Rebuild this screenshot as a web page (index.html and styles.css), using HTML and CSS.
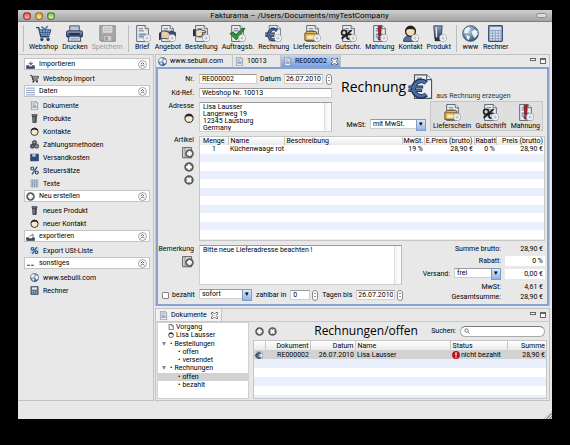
FILE: index.html
```html
<!DOCTYPE html>
<html lang="de">
<head>
    <meta charset="UTF-8">
    <meta name="viewport" content="width=device-width, initial-scale=1.0">
    <title>Fakturama</title>
    <link rel="stylesheet" href="styles.css">
</head>
<body>
    <!-- Icons -->
    <svg class="sprite" aria-hidden="true">
        <linearGradient id="steel" x1="0" y1="0" x2="0" y2="1">
            <stop offset="0" stop-color="#8fa5c2"/>
            <stop offset="1" stop-color="#25395c"/>
        </linearGradient>
        <radialGradient id="globe-fill" cx=".35" cy=".3" r=".8">
            <stop offset="0" stop-color="#c3d6ec"/>
            <stop offset="1" stop-color="#24466f"/>
        </radialGradient>
        <symbol id="doc" viewBox="0 0 16 16">
            <path d="M2.5.5h8l3 3v12h-11z" fill="#e9edf2" stroke="#4c5563" stroke-width=".8"/>
            <path d="M10.5.5v3h3" fill="#fff" stroke="#4c5563" stroke-width=".8"/>
            <path d="M4.5 3.5h4M4.5 5.5h5" stroke="#5c6470" stroke-width=".8"/>
            <path d="M4.5 7.5h7v5h-7z" fill="#a9bcd6"/>
            <path d="M4.5 9h7M4.5 11h7" stroke="#6d86ab" stroke-width=".7"/>
        </symbol>
        <symbol id="page" viewBox="0 0 16 16">
            <path d="M4 .5h7.500l3 3v11.500H4z" fill="#eceff3" stroke="#4c5563" stroke-width=".7"/>
            <path d="M11.500.5v3h3" fill="#fff" stroke="#4c5563" stroke-width=".7"/>
            <path d="M5.500 2.500h3M5.500 4h4" stroke="#5c6470" stroke-width=".6"/>
        </symbol>
        <symbol id="plus" viewBox="0 0 16 16">
            <circle cx="12.3" cy="12.3" r="3.4" fill="#fff" stroke="#8a8f96" stroke-width=".6"/>
            <path d="M12.3 10.2v4.2M10.2 12.3h4.2" stroke="#c0c4ca" stroke-width="1.2"/>
        </symbol>
        <symbol id="cart" viewBox="0 0 16 16">
            <path d="M1 2.5h2.5l2 8.5h8" fill="none" stroke="#263d63" stroke-width="1.3"/>
            <path d="M4 4.5h11l-1.5 5H5.3z" fill="#8ba8d0" stroke="#2f4b78" stroke-width=".9"/>
            <path d="M7 4.5l.6 5M9.7 4.5v5M12.4 4.5l-.6 5M4.6 7h9.6" stroke="#2f4b78" stroke-width=".7"/>
            <path d="M6 1.5l4 3M12 1l-3 3.5" stroke="#4a6ea5" stroke-width="1.3"/>
            <circle cx="6.5" cy="13.6" r="1.6" fill="#31486d"/>
            <circle cx="12.3" cy="13.6" r="1.6" fill="#31486d"/>
        </symbol>
        <symbol id="cart-dark" viewBox="0 0 16 16">
            <path d="M0 2.5h3l2 8.5h9" fill="none" stroke="#222" stroke-width="1.5"/>
            <path d="M4 4h11.5L13.8 9H5.2z" fill="#777" stroke="#222"/>
            <path d="M7 4v5M10 4v5M12.5 4v5" stroke="#ddd" stroke-width=".8"/>
            <circle cx="6" cy="13.6" r="1.7" fill="#222"/>
            <circle cx="12.5" cy="13.6" r="1.7" fill="#222"/>
        </symbol>
        <symbol id="printer" viewBox="0 0 16 16">
            <path d="M3.5 6V.8h9V6" fill="#b8c6da" stroke="#45526a" stroke-width=".9"/>
            <rect x=".5" y="5.5" width="15" height="6" rx="1.3" fill="url(#steel)" stroke="#1d2a42" stroke-width=".8"/>
            <path d="M3 8.5h10" stroke="#141d2d" stroke-width="1.4"/>
            <path d="M3 10.5h10l1 4.8H2z" fill="#cdd9e9" stroke="#35445f" stroke-width=".9"/>
            <path d="M4.5 13h7" stroke="#7e94b5"/>
        </symbol>
        <symbol id="floppy" viewBox="0 0 16 16">
            <path d="M.8.8h14.4v14.4H2L.8 14z" fill="#a9a9a9" stroke="#8c8c8c"/>
            <path d="M3.5 1h9v6.3h-9z" fill="#dcdcdc"/>
            <path d="M4.5 3h7M4.5 5h7" stroke="#b5b5b5" stroke-width=".8"/>
            <path d="M4.5 9.8h7.5v5.4H4.5z" fill="#cfcfcf" stroke="#909090" stroke-width=".6"/>
            <path d="M6 11h2v3.3H6z" fill="#8f8f8f"/>
        </symbol>
        <symbol id="handshake" viewBox="0 0 16 16">
            <path d="M0 8l4-2.5 5 1 3 3.5-4 3-5-.5-3 1.5z" fill="#e6cfa9" stroke="#3b342b" stroke-width=".8"/>
            <path d="M8 6.5l4-1.5 4 2v5l-4-1z" fill="#3b4d6e"/>
            <path d="M0 8l2.2-1.5v6L0 14z" fill="#26344f"/>
        </symbol>
        <symbol id="pointing" viewBox="0 0 16 16">
            <path d="M0 4h2.5v6.5H0z" fill="#222d42"/>
            <path d="M2.5 5l4-.8 5.5 1.6v1.4H8.5l.8 1-1 2.3-3.3.5-2.5-1z" fill="#efdcbb" stroke="#3b342b" stroke-width=".8"/>
        </symbol>
        <symbol id="check" viewBox="0 0 16 16">
            <path d="M1 8l3-1.5 2.3 3L12.5 3l2.5.3L6.8 14z" fill="#2f9a36" stroke="#12501a" stroke-width=".8"/>
        </symbol>
        <symbol id="euro" viewBox="0 0 16 16">
            <g fill="none" stroke="#182a48">
                <path d="M11.3 5.400A4.800 4.800 0 1 0 11.3 12.600" stroke-width="3"/>
                <path d="M.3 8h9M.3 10.200h8.400" stroke-width="1.7"/>
            </g>
            <g fill="none" stroke="#4a6ca2">
                <path d="M11.1 5.600A4.600 4.600 0 1 0 11.1 12.400" stroke-width="1.8"/>
                <path d="M.7 8h8.200M.7 10.200h7.600" stroke-width=".8"/>
            </g>
        </symbol>
        <symbol id="parcel" viewBox="0 0 16 16">
            <path d="M.8 8l2-2h8.5l1 2v6.5H.8z" fill="#dcb85a" stroke="#56441b" stroke-width=".8"/>
            <path d="M.8 8.2h11.5" stroke="#7b6228" stroke-width=".8"/>
            <path d="M3 10h6v3H3z" fill="#f7ecc7"/>
        </symbol>
        <symbol id="percent-cut" viewBox="0 0 16 16">
            <path d="M1.5 13L11 4.8" stroke="#1d1d1d" stroke-width="1.8"/>
            <circle cx="3.8" cy="7.3" r="2.3" fill="#d7d7d7" stroke="#1d1d1d" stroke-width="1.5"/>
            <circle cx="8.8" cy="11" r="2.3" fill="#d7d7d7" stroke="#1d1d1d" stroke-width="1.5"/>
        </symbol>
        <symbol id="exclaim" viewBox="0 0 16 16">
            <path d="M6.6 1.2h3.2l-.7 9H7.3z" fill="#b3202c" stroke="#5d0d14" stroke-width=".6"/>
            <circle cx="8.2" cy="12.8" r="1.6" fill="#b3202c" stroke="#5d0d14" stroke-width=".6"/>
        </symbol>
        <symbol id="person" viewBox="0 0 16 16">
            <path d="M1.5 15.5c0-4 2.5-5.5 6.5-5.5s6.5 1.5 6.5 5.5z" fill="#56709a" stroke="#26354f" stroke-width=".8"/>
            <circle cx="8" cy="6" r="4.6" fill="#f0dfb9" stroke="#231e17" stroke-width="1.2"/>
            <path d="M3 6c0-7 10-7 10 0-1-1.500-2-2.200-5-2.200S4 4.500 3 6z" fill="#231e17"/>
        </symbol>
        <symbol id="face" viewBox="0 0 16 16">
            <circle cx="8" cy="8.5" r="6.5" fill="#f6ead0" stroke="#2a2620" stroke-width="1.6"/>
            <path d="M1.5 8C1.5-1 14.5-1 14.5 8c-1.5-2-3-3-6.5-3s-5 1-6.500 3z" fill="#2a2620"/>
        </symbol>
        <symbol id="product" viewBox="0 0 16 16">
            <path d="M3.500.8h8l-1 12h-6z" fill="url(#steel)" stroke="#333b48" stroke-width=".8"/>
            <path d="M5.800 2l.4 9.500" stroke="#dfe7f1" stroke-width="1.3"/>
            <path d="M4.500 12.500h6v2.700h-6z" fill="#2a303a"/>
        </symbol>
        <symbol id="product-dark" viewBox="0 0 16 16">
            <path d="M3.500.8h9v3h-9z" fill="#8a909a" stroke="#22262c"/>
            <path d="M4.500 4h7l-.5 11.200H5z" fill="#474d57" stroke="#22262c"/>
            <path d="M7 5.500v8" stroke="#a9b0ba" stroke-width="1.5"/>
        </symbol>
        <symbol id="globe" viewBox="0 0 16 16">
            <circle cx="8" cy="8" r="7.4" fill="url(#globe-fill)" stroke="#2b476b" stroke-width=".7"/>
            <path d="M3 3.500l3.500-1.700 1.500 2-2 1.400.5 1.800-3 1-1.700-1zM9 6.500l2.500-2.300 3 1.500.3 3.300-2.800 3.500-1.600-2.500zM4 9.500l3.500 1-1 3.700-2-1.200z" fill="#eef3f8"/>
        </symbol>
        <symbol id="calc" viewBox="0 0 16 16">
            <rect x="1.5" y=".6" width="13" height="14.8" rx=".8" fill="#93a9ca" stroke="#3b4c69"/>
            <path d="M3 2h10v2.500H3z" fill="#dbe6f0"/>
            <path d="M3 6.500h10M3 9h10M3 11.500h10M3 14h10" stroke="#e3eaf4" stroke-width="1.4" stroke-dasharray="1.6 1.1"/>
        </symbol>
        <symbol id="calc-dark" viewBox="0 0 16 16">
            <rect x="1.5" y=".6" width="13" height="14.8" rx=".8" fill="#5b6d8c" stroke="#2d3a52"/>
            <path d="M3.500 2.500h9v4h-9z" fill="#e6edf5"/>
            <path d="M3.500 9.500h9M3.500 12.500h9" stroke="#b4c2d8" stroke-width="1.5" stroke-dasharray="2 1.4"/>
        </symbol>
        <symbol id="import" viewBox="0 0 16 16">
            <path d="M1 10h4v2h6v-2h4v5H1z" fill="#3f5274" stroke="#1f2b42"/>
            <path d="M8.500 2v4M5 5.500h7L8.500 9.500z" fill="#777" stroke="#666"/>
        </symbol>
        <symbol id="export" viewBox="0 0 16 16">
            <path d="M1 10h4v2h6v-2h4v5H1z" fill="#3f5274" stroke="#1f2b42"/>
            <path d="M6 9c0-3 2-4.500 5-4.500V2l4 3.800-4 3.500V7C9 7 7.500 7.500 6 9z" fill="#999"/>
        </symbol>
        <symbol id="lines" viewBox="0 0 16 16">
            <path d="M0 2h16M0 6h16M0 10h16M0 14h16" stroke="#7b93bb" stroke-width="1.6"/>
        </symbol>
        <symbol id="coins" viewBox="0 0 16 16">
            <circle cx="8" cy="4.5" r="3.8" fill="#5b6474" stroke="#22262e"/>
            <circle cx="4.3" cy="11" r="3.8" fill="#4a5363" stroke="#22262e"/>
            <circle cx="11.7" cy="11" r="3.8" fill="#717b8c" stroke="#22262e"/>
            <path d="M6.500 4.500h3M3 11h2.600M10.300 11H13" stroke="#ccd3de"/>
        </symbol>
        <symbol id="box" viewBox="0 0 16 16">
            <path d="M1 2h14v12H1z" fill="#2e4b7d" stroke="#1c3055"/>
            <path d="M4 2h6v4.500H4z" fill="#b9c9e2"/>
        </symbol>
        <symbol id="percent" viewBox="0 0 16 16">
            <path d="M13 1L3.500 15" stroke="#27436f" stroke-width="2"/>
            <circle cx="4" cy="4.5" r="2.7" fill="none" stroke="#27436f" stroke-width="2"/>
            <circle cx="12" cy="11.5" r="2.7" fill="none" stroke="#27436f" stroke-width="2"/>
        </symbol>
        <symbol id="percent-page" viewBox="0 0 16 16">
            <path d="M0 2h16v12H0z" fill="#c5d6ea"/>
            <path d="M12 2L4 14" stroke="#2a5b97" stroke-width="2"/>
            <circle cx="4.5" cy="5" r="2.3" fill="none" stroke="#2a5b97" stroke-width="2"/>
            <circle cx="11.5" cy="11" r="2.3" fill="none" stroke="#2a5b97" stroke-width="2"/>
        </symbol>
        <symbol id="texts" viewBox="0 0 16 16">
            <path d="M1 1h14v14H1z" fill="#b4bfce"/>
            <path d="M4 1v14M8 1v14M12 1v14" stroke="#7f8fa6" stroke-width="1.5" stroke-dasharray="3 1"/>
        </symbol>
        <symbol id="add" viewBox="0 0 16 16">
            <circle cx="8" cy="8" r="6.4" fill="#8a8a8a" stroke="#555" stroke-width="2.4"/>
            <path d="M8 3.500v9M3.500 8h9" stroke="#fff" stroke-width="3.6"/>
        </symbol>
        <symbol id="remove" viewBox="0 0 16 16">
            <circle cx="8" cy="8" r="6.4" fill="#8a8a8a" stroke="#555" stroke-width="2.4"/>
            <path d="M4.800 4.800l6.400 6.400M11.200 4.800l-6.400 6.400" stroke="#fff" stroke-width="3.2"/>
        </symbol>
        <symbol id="add-from" viewBox="0 0 20 20">
            <path d="M1 1h15v17H1z" fill="#dedede" stroke="#555" stroke-width="1.5"/>
            <path d="M5 1v17" stroke="#555"/>
            <circle cx="12.5" cy="11" r="6" fill="#8a8a8a" stroke="#555" stroke-width="2.2"/>
            <path d="M12.500 6.800v8.400M8.300 11h8.400" stroke="#fff" stroke-width="3.4"/>
        </symbol>
        <symbol id="dots" viewBox="0 0 16 16">
            <path d="M2 11h5M9 11h5" stroke="#333" stroke-width="1.8"/>
        </symbol>
        <symbol id="collapse" viewBox="0 0 18 18">
            <circle cx="9" cy="9" r="8" fill="#fff" stroke="#777" stroke-width="1.3"/>
            <path d="M5.500 8.500L9 5l3.500 3.500M5.500 13L9 9.500l3.500 3.500" fill="none" stroke="#444" stroke-width="1.7"/>
        </symbol>
        <symbol id="close" viewBox="0 0 14 14">
            <path d="M1 1h3l3 3 3-3h3v3l-3 3 3 3v3h-3l-3-3-3 3H1v-3l3-3-3-3z" fill="#fff" stroke="#444" stroke-width="1.5"/>
        </symbol>
        <symbol id="search" viewBox="0 0 16 16">
            <circle cx="6.5" cy="6.5" r="4.5" fill="none" stroke="#555" stroke-width="2"/>
            <path d="M10 10l4.500 4.500" stroke="#555" stroke-width="2.4"/>
        </symbol>
        <symbol id="sheet" viewBox="0 0 16 16">
            <path d="M3 1h7l4 4v10H3z" fill="#fff" stroke="#333" stroke-width="1.8"/>
            <path d="M9.500 1v4.500H14" fill="none" stroke="#333" stroke-width="1.3"/>
        </symbol>
        <symbol id="alert" viewBox="0 0 16 16">
            <circle cx="8" cy="8" r="7.8" fill="#b5121b"/>
            <path d="M8 2.500v7" stroke="#fff" stroke-width="2.6"/>
            <circle cx="8" cy="12.3" r="1.5" fill="#fff"/>
        </symbol>
    </svg>

    <div class="window">
        <header class="titlebar">
            <div class="lights">
                <button class="light red" aria-label="Schließen"></button>
                <button class="light yellow" aria-label="Minimieren"></button>
                <button class="light green" aria-label="Zoomen"></button>
            </div>
            <div class="window-title">Fakturama – /Users/Documents/myTestCompany</div>
            <button class="pill" aria-label="Symbolleiste"></button>
        </header>

        <nav class="toolbar">
            <span class="sep"></span>
            <button class="tool"><svg><use href="#cart"/></svg>Webshop</button>
            <button class="tool"><svg><use href="#printer"/></svg>Drucken</button>
            <button class="tool" disabled><svg><use href="#floppy"/></svg>Speichern</button>
            <span class="sep"></span>
            <button class="tool"><svg><use href="#doc"/><use href="#plus"/></svg>Brief</button>
            <button class="tool"><svg><use href="#doc"/><use href="#handshake"/><use href="#plus"/></svg>Angebot</button>
            <button class="tool"><svg><use href="#doc"/><use href="#pointing"/><use href="#plus"/></svg>Bestellung</button>
            <button class="tool"><svg><use href="#doc"/><use href="#check"/><use href="#plus"/></svg>Auftragsb.</button>
            <button class="tool"><svg><use href="#page"/><use href="#euro"/><use href="#plus"/></svg>Rechnung</button>
            <button class="tool"><svg><use href="#doc"/><use href="#parcel"/><use href="#plus"/></svg>Lieferschein</button>
            <button class="tool"><svg><use href="#doc"/><use href="#percent-cut"/><use href="#plus"/></svg>Gutschr.</button>
            <button class="tool"><svg><use href="#doc"/><use href="#exclaim"/><use href="#plus"/></svg>Mahnung</button>
            <button class="tool"><svg><use href="#person"/><use href="#plus"/></svg>Kontakt</button>
            <button class="tool"><svg><use href="#product"/><use href="#plus"/></svg>Produkt</button>
            <span class="sep"></span>
            <button class="tool"><svg><use href="#globe"/></svg>www</button>
            <button class="tool"><svg><use href="#calc"/></svg>Rechner</button>
        </nav>

        <div class="workspace">
            <aside class="sidebar">
                <h2 class="group"><svg><use href="#import"/></svg>Importieren<svg class="chevron"><use href="#collapse"/></svg></h2>
                <ul class="entries">
                    <li><svg><use href="#cart-dark"/></svg>Webshop Import</li>
                </ul>
                <h2 class="group"><svg><use href="#lines"/></svg>Daten<svg class="chevron"><use href="#collapse"/></svg></h2>
                <ul class="entries">
                    <li><svg><use href="#doc"/></svg>Dokumente</li>
                    <li><svg><use href="#product-dark"/></svg>Produkte</li>
                    <li><svg><use href="#face"/></svg>Kontakte</li>
                    <li><svg><use href="#coins"/></svg>Zahlungsmethoden</li>
                    <li><svg><use href="#box"/></svg>Versandkosten</li>
                    <li><svg><use href="#percent"/></svg>Steuersätze</li>
                    <li><svg><use href="#texts"/></svg>Texte</li>
                </ul>
                <h2 class="group"><svg><use href="#add"/></svg>Neu erstellen<svg class="chevron"><use href="#collapse"/></svg></h2>
                <ul class="entries">
                    <li><svg><use href="#product-dark"/></svg>neues Produkt</li>
                    <li><svg><use href="#face"/></svg>neuer Kontakt</li>
                </ul>
                <h2 class="group"><svg><use href="#export"/></svg>exportieren<svg class="chevron"><use href="#collapse"/></svg></h2>
                <ul class="entries">
                    <li><svg><use href="#percent-page"/></svg>Export USt-Liste</li>
                </ul>
                <h2 class="group"><svg><use href="#dots"/></svg>sonstiges<svg class="chevron"><use href="#collapse"/></svg></h2>
                <ul class="entries">
                    <li><svg><use href="#globe"/></svg>www.sebulli.com</li>
                    <li><svg><use href="#calc-dark"/></svg>Rechner</li>
                </ul>
            </aside>

            <main class="main">
                <section class="editor">
                    <div class="tabs">
                        <button class="tab tab-web"><svg><use href="#globe"/></svg>www.sebulli.com</button>
                        <button class="tab tab-order"><svg><use href="#doc"/></svg>10013</button>
                        <button class="tab active"><svg><use href="#doc"/></svg>RE000002<svg class="close"><use href="#close"/></svg></button>
                        <div class="view-buttons"><i class="min"></i><i class="max"></i></div>
                    </div>

                    <form class="invoice">
                        <div class="head">
                            <div class="address">
                                <label for="nr">Nr.</label>
                                <div class="line">
                                    <input class="nr" id="nr" type="text" value="RE000002">
                                    <label for="date">Datum</label>
                                    <input class="date" id="date" type="text" value="26.07.2010">
                                    <button class="stepper" type="button" aria-label="Datum ändern"></button>
                                </div>
                                <label for="ref">Kd-Ref.</label>
                                <input id="ref" type="text" value="Webshop Nr. 10013">
                                <div class="side">
                                    <label for="addr">Adresse</label>
                                    <svg><use href="#face"/></svg>
                                </div>
                                <textarea class="addr" id="addr">Lisa Lausser
Langerweg 19
12345 Lausburg
Germany</textarea>
                            </div>
                            <div class="heading">
                                <div class="title-line">
                                    <h1>Rechnung</h1>
                                    <svg class="big-icon"><use href="#page"/><use href="#euro"/></svg>
                                    <span class="caption">aus Rechnung erzeugen</span>
                                </div>
                                <div class="create-line">
                                    <div class="vat">
                                        <label for="vat">MwSt:</label>
                                        <span class="select"><select id="vat"><option>mit MwSt.</option></select></span>
                                    </div>
                                    <div class="create">
                                        <button class="tool" type="button"><svg><use href="#doc"/><use href="#parcel"/><use href="#plus"/></svg>Lieferschein</button>
                                        <button class="tool" type="button"><svg><use href="#doc"/><use href="#percent-cut"/><use href="#plus"/></svg>Gutschrift</button>
                                        <button class="tool" type="button"><svg><use href="#doc"/><use href="#exclaim"/><use href="#plus"/></svg>Mahnung</button>
                                    </div>
                                </div>
                            </div>
                        </div>

                        <div class="items">
                            <div class="side">
                                <span>Artikel</span>
                                <svg class="from"><use href="#add-from"/></svg>
                                <svg><use href="#add"/></svg>
                                <svg><use href="#remove"/></svg>
                            </div>
                            <div class="sheet">
                                <table>
                                    <colgroup>
                                        <col class="c-qty"><col class="c-name"><col><col class="c-vat"><col class="c-unit"><col class="c-disc"><col class="c-price">
                                    </colgroup>
                                    <thead>
                                        <tr>
                                            <th class="mid">Menge</th>
                                            <th>Name</th>
                                            <th>Beschreibung</th>
                                            <th class="num">MwSt.</th>
                                            <th class="num">E.Preis (brutto)</th>
                                            <th class="num">Rabatt</th>
                                            <th class="num">Preis (brutto)</th>
                                        </tr>
                                    </thead>
                                    <tbody>
                                        <tr>
                                            <td class="mid">1</td>
                                            <td>Küchenwaage rot</td>
                                            <td></td>
                                            <td class="num">19 %</td>
                                            <td class="num">28,90 €</td>
                                            <td class="num">0 %</td>
                                            <td class="num">28,90 €</td>
                                        </tr>
                                    </tbody>
                                </table>
                            </div>
                        </div>

                        <div class="foot">
                            <div class="notes">
                                <div class="remark">
                                    <div class="side">
                                        <label for="remark">Bemerkung</label>
                                        <svg class="from"><use href="#add-from"/></svg>
                                    </div>
                                    <textarea id="remark">Bitte neue Lieferadresse beachten !</textarea>
                                </div>
                                <div class="payment">
                                    <label class="paid"><input type="checkbox">bezahlt</label>
                                    <span class="select pay"><select aria-label="Zahlungsart"><option>sofort</option></select></span>
                                    <label for="days">zahlbar in</label>
                                    <input class="days" id="days" type="text" value="0">
                                    <button class="stepper" type="button" aria-label="Tage ändern"></button>
                                    <label for="due">Tagen bis</label>
                                    <input class="date" id="due" type="text" value="26.07.2010">
                                    <button class="stepper" type="button" aria-label="Fälligkeit ändern"></button>
                                </div>
                            </div>
                            <div class="totals">
                                <span>Summe brutto:</span>
                                <output>28,90 €</output>
                                <label for="discount">Rabatt:</label>
                                <input id="discount" type="text" value="0 %">
                                <div class="shipping">
                                    <label for="ship">Versand:</label>
                                    <span class="select"><select id="ship"><option>frei</option></select></span>
                                </div>
                                <input type="text" value="0,00 €" aria-label="Versandkosten">
                                <span>MwSt:</span>
                                <output>4,61 €</output>
                                <span>Gesamtsumme:</span>
                                <output>28,90 €</output>
                            </div>
                        </div>
                    </form>
                </section>

                <section class="documents">
                    <div class="tabs">
                        <button class="tab"><svg><use href="#doc"/></svg>Dokumente<svg class="close"><use href="#close"/></svg></button>
                        <div class="view-buttons"><i class="min"></i><i class="max"></i></div>
                    </div>
                    <div class="browser">
                        <ul class="tree">
                            <li><svg><use href="#sheet"/></svg>Vorgang</li>
                            <li><svg><use href="#face"/></svg>Lisa Lausser</li>
                            <li class="branch">Bestellungen</li>
                            <li class="leaf">offen</li>
                            <li class="leaf">versendet</li>
                            <li class="branch">Rechnungen</li>
                            <li class="leaf selected">offen</li>
                            <li class="leaf">bezahlt</li>
                        </ul>
                        <div class="list">
                            <div class="list-head">
                                <button class="round" aria-label="Neu"><svg><use href="#add"/></svg></button>
                                <button class="round" aria-label="Löschen"><svg><use href="#remove"/></svg></button>
                                <h2>Rechnungen/offen</h2>
                                <label for="search">Suchen:</label>
                                <div class="search">
                                    <svg><use href="#search"/></svg>
                                    <input id="search" type="text">
                                </div>
                            </div>
                            <div class="sheet">
                                <table>
                                    <colgroup>
                                        <col class="d-icon"><col class="d-doc"><col class="d-doc"><col><col class="d-status"><col class="d-sum">
                                    </colgroup>
                                    <thead>
                                        <tr>
                                            <th></th>
                                            <th class="num">Dokument</th>
                                            <th class="num">Datum</th>
                                            <th>Name</th>
                                            <th>Status</th>
                                            <th class="num">Summe</th>
                                        </tr>
                                    </thead>
                                    <tbody>
                                        <tr class="selected">
                                            <td class="mark"><svg><use href="#page"/><use href="#euro"/></svg></td>
                                            <td class="num">RE000002</td>
                                            <td class="num">26.07.2010</td>
                                            <td>Lisa Lausser</td>
                                            <td><svg><use href="#alert"/></svg>nicht bezahlt</td>
                                            <td class="num">28,90 €</td>
                                        </tr>
                                    </tbody>
                                </table>
                            </div>
                        </div>
                    </div>
                </section>
            </main>
        </div>

        <footer class="statusbar"><i class="grip"></i></footer>
    </div>
</body>
</html>
```

FILE: styles.css
```css
* {
    box-sizing: border-box;
}

body {
    display: flex;
    min-height: 100vh;
    margin: 0;
    padding: 10px 18px 26px;
    background: #000;
    color: #000;
    font: 400 7px/8px Roboto, "Liberation Sans", sans-serif;
}

h1, h2, ul {
    margin: 0;
    padding: 0;
    font-weight: 400;
}

ul {
    list-style: none;
}

svg {
    flex: none;
    width: 9px;
    height: 9px;
}

.sprite {
    position: absolute;
    width: 0;
    height: 0;
}

button, input, select, textarea {
    margin: 0;
    padding: 0;
    border: none;
    border-radius: 0;
    background: none;
    color: inherit;
    font: inherit;
    outline: none;
}

/* Window */

.window {
    display: flex;
    flex: 1;
    flex-direction: column;
    min-width: 0;
    background: #e8e8e8;
}

.titlebar {
    display: flex;
    align-items: center;
    height: 12px;
    padding: 0 5px;
    background: linear-gradient(#cfcfcf, #a3a3a3);
    border-bottom: 1px solid #7d7d7d;
}

.window-title {
    flex: 1;
    padding-left: 8px;
    font-size: 8px;
    text-align: center;
}

.lights {
    display: flex;
    gap: 4px;
}

.light {
    width: 8px;
    height: 8px;
    border: 1px solid rgba(0, 0, 0, 0.4);
    border-radius: 50%;
}

.red {
    background: radial-gradient(circle at 50% 75%, #ffb0a8, #d8372f);
}

.yellow {
    background: radial-gradient(circle at 50% 75%, #ffe7a0, #e08a22);
}

.green {
    background: radial-gradient(circle at 50% 75%, #d6f5a8, #62a834);
}

.pill {
    width: 11px;
    height: 5px;
    border: 1px solid #8d8d8d;
    border-radius: 3px;
    background: #dcdcdc;
}

/* Toolbar */

.toolbar {
    display: flex;
    gap: 4px;
    height: 32px;
    padding: 3px 4px 2px;
}

.sep {
    width: 1px;
    margin: 0 1px;
    background: #bdbdbd;
}

.tool {
    display: flex;
    flex-direction: column;
    align-items: center;
    gap: 1px;
}

.tool svg {
    width: 17px;
    height: 17px;
}

.tool:disabled {
    color: #999;
}

/* Sidebar */

.workspace {
    display: flex;
    flex: 1;
}

.sidebar {
    flex: none;
    width: 136px;
    padding: 3px 3px 0 6px;
    border: 1px solid #c2c2c2;
    border-left: none;
}

.group {
    display: flex;
    align-items: center;
    gap: 4px;
    height: 12px;
    padding: 0 2px 0 1px;
    border: 1px solid #c4c4c4;
    background: #fff;
    font-size: 7px;
}

.chevron {
    margin-left: auto;
}

.entries {
    padding: 2px 6px 0;
}

.entries li {
    display: flex;
    align-items: center;
    gap: 4px;
    height: 13px;
}

/* Tabs */

.main {
    display: flex;
    flex: 1;
    flex-direction: column;
    gap: 2px;
    min-width: 0;
    padding: 0 2px 0 1px;
}

.tabs {
    display: flex;
    height: 13px;
}

.tab {
    display: flex;
    align-items: center;
    gap: 3px;
    padding: 0 3px;
    border-right: 1px solid #c4c4c4;
}

.editor .tab {
    padding: 0 2px;
}

.tab-web {
    width: 77px;
}

.tab-order {
    width: 48px;
}

.tab .close {
    width: 7px;
    height: 7px;
    margin-left: 1px;
}

.tab.active {
    background: linear-gradient(#c3d7f5, #7a9ddc);
}

.view-buttons {
    display: flex;
    gap: 4px;
    margin: 3px 3px 0 auto;
}

.min, .max {
    width: 6px;
    height: 3px;
    border: 1px solid #666;
    background: #fff;
}

.max {
    height: 6px;
    border-top-width: 2px;
}

/* Editor */

.editor {
    display: flex;
    flex: 1;
    flex-direction: column;
    border: 1px solid #c2c2c2;
    border-bottom: none;
}

.editor .tabs {
    height: 12px;
}

.invoice {
    display: flex;
    flex: 1;
    flex-direction: column;
    gap: 4px;
    padding: 5px 2px 3px 4px;
    border: 2px solid #86a3d2;
}

.invoice input, .invoice textarea, .invoice select {
    min-width: 0;
    height: 10px;
    padding: 0 2px;
    border: 1px solid #cfcfcf;
    border-top-color: #999;
    background: #fff;
    line-height: 8px;
}

.invoice textarea {
    padding: 1px 3px;
    border-right-color: #bbb;
    background: linear-gradient(90deg, #ddd 1px, #f3f3f3 1px, #fff) right / 7px 100% no-repeat #fff;
    line-height: 7px;
    resize: none;
    overflow: hidden;
}

.head {
    display: flex;
    gap: 9px;
}

.address {
    display: grid;
    grid-template-columns: 32px 133px;
    gap: 4px 5px;
    align-items: center;
    justify-items: end;
}

.address > input, .address > textarea, .line {
    width: 100%;
}

.address .addr {
    height: 30px;
}

.line {
    display: flex;
    justify-content: space-between;
    align-items: center;
    height: 10px;
}

.invoice .nr {
    width: 58px;
}

.invoice .date {
    width: 39px;
    padding: 0 1px;
}

.stepper {
    display: grid;
    align-content: center;
    justify-items: center;
    gap: 2px;
    width: 6px;
    height: 11px;
    border: 1px solid #888;
    border-radius: 3px;
    background: #fff;
}

.stepper::before, .stepper::after {
    content: "";
    border: 1px solid transparent;
    border-bottom-color: #222;
}

.stepper::after {
    border-color: #222 transparent transparent;
}

.side {
    display: flex;
    flex: none;
    flex-direction: column;
    align-items: flex-end;
    align-self: stretch;
    gap: 3px;
    width: 32px;
}

.side svg {
    width: 10px;
    height: 10px;
}

.side .from {
    width: 12px;
    height: 12px;
}

.heading {
    display: flex;
    flex: 1;
    flex-direction: column;
    gap: 1px;
    padding-right: 2px;
}

.title-line {
    display: flex;
    align-items: center;
    gap: 2px;
    height: 26px;
}

.heading h1 {
    font: 500 14px/18px "Open Sans", sans-serif;
}

.big-icon {
    width: 26px;
    height: 26px;
}

.caption {
    align-self: flex-end;
    color: #333;
}

.create-line {
    display: flex;
    align-items: flex-end;
    justify-content: space-between;
}

.vat, .shipping {
    display: flex;
    flex: 1;
    align-items: center;
    justify-content: flex-end;
    gap: 4px;
}

.vat {
    padding-right: 4px;
}

.create {
    display: flex;
    justify-content: space-between;
    width: 113px;
    height: 30px;
    padding: 2px;
    border: 1px solid #c6c6c6;
    background: #dfdfdf;
}

.select {
    display: grid;
    width: 56px;
}

.select select, .select::after {
    grid-area: 1 / 1;
}

.select select {
    width: 100%;
    appearance: none;
}

.select::after {
    content: "▾";
    justify-self: end;
    z-index: 1;
    width: 8px;
    height: 10px;
    border: 1px solid #7d9ccb;
    background: linear-gradient(#dbe9fb, #8db5ec);
    text-align: center;
    pointer-events: none;
}

.items {
    display: flex;
    flex: 1;
    gap: 5px;
}

/* Tables */

.sheet {
    flex: 1;
    min-width: 0;
    border: 1px solid #c6c6c6;
    background: repeating-linear-gradient(#e9f0fc 0 8px, #fff 8px 17px);
}

table {
    width: 100%;
    border-collapse: collapse;
    table-layout: fixed;
}

th, td {
    height: 8px;
    padding: 0 2px;
    font-weight: 400;
    line-height: 8px;
    text-align: left;
    white-space: nowrap;
}

th {
    border-right: 1px solid #c9c9c9;
    background: linear-gradient(#fff, #e9e9e9);
}

th:last-child {
    border-right: none;
}

th.num, td.num {
    padding: 0 1px;
    text-align: right;
}

th.mid, td.mid {
    text-align: center;
}

.c-qty {
    width: 28px;
}

.c-name {
    width: 56px;
}

.c-vat {
    width: 22px;
}

.c-unit {
    width: 50px;
}

.c-disc {
    width: 22px;
}

.c-price {
    width: 48px;
}

/* Remark, payment and totals */

.foot {
    display: flex;
    gap: 8px;
}

.notes {
    display: flex;
    flex-direction: column;
    gap: 4px;
}

.remark {
    display: flex;
    gap: 5px;
    width: 240px;
}

.invoice #remark {
    flex: 1;
    height: 40px;
}

.payment {
    display: flex;
    align-items: center;
    gap: 4px;
}

.payment .date + .stepper, .days + .stepper {
    margin-left: -2px;
}

.paid {
    display: flex;
    align-items: center;
    gap: 3px;
    width: 33px;
}

.invoice .paid input {
    appearance: none;
    width: 7px;
    height: 7px;
    padding: 0;
    border: 1px solid #888;
    border-radius: 1px;
}

.invoice .days {
    width: 20px;
}

.pay {
    width: 53px;
}

.totals {
    display: grid;
    flex: 1;
    grid-template-columns: 1fr 40px;
    gap: 2px 4px;
    align-content: space-between;
    align-items: center;
    text-align: right;
}

.totals input {
    width: 100%;
    padding: 0 1px;
    border-color: #fff;
    text-align: right;
}

.totals output {
    padding-right: 2px;
}

.shipping .select {
    width: 47px;
}

/* Documents */

.documents {
    border: 1px solid #c2c2c2;
}

.documents .tab {
    background: #f2f2f2;
}

.documents .tabs {
    border-bottom: 1px solid #c9c9c9;
}

.browser {
    display: flex;
    gap: 4px;
    padding: 0 2px 1px 1px;
}

.tree {
    display: grid;
    grid-template-rows: repeat(8, 1fr);
    width: 92px;
    height: 77px;
    padding-bottom: 9px;
    border: 1px solid #d0d0d0;
    background: #fff;
}

.tree li {
    display: flex;
    align-items: center;
    gap: 2px;
    padding-left: 10px;
}

.tree svg {
    width: 6px;
    height: 6px;
}

.tree .branch {
    padding-left: 4px;
}

.tree .branch::before {
    content: "";
    order: -2;
    margin-right: 2px;
    border: 2px solid transparent;
    border-top: 4px solid #888;
    border-bottom: none;
}

.tree .branch::after {
    content: "•";
    order: -1;
}

.tree .leaf {
    padding-left: 20px;
}

.leaf::before {
    content: "•";
}

.tree .selected, tr.selected {
    background: #d2d2d2;
}

.list {
    display: flex;
    flex: 1;
    flex-direction: column;
    min-width: 0;
}

.list-head {
    display: flex;
    align-items: center;
    gap: 4px;
    height: 18px;
    padding: 0 2px;
}

.round {
    display: flex;
}

.list-head h2 {
    flex: 1;
    padding-left: 24px;
    font: 500 12px/16px "Open Sans", sans-serif;
    text-align: center;
}

.search {
    display: flex;
    align-items: center;
    gap: 2px;
    width: 85px;
    height: 11px;
    padding: 0 3px;
    border: 1px solid #aaa;
    border-top-color: #777;
    border-radius: 6px;
    background: #fff;
}

.search svg {
    width: 6px;
    height: 6px;
}

.search input {
    flex: 1;
    min-width: 0;
}

.list th, .list td {
    height: 9px;
}

.list .sheet {
    background: repeating-linear-gradient(#e9f0fc 0 9px, #fff 9px 18px);
}

.list td svg {
    width: 8px;
    height: 8px;
    margin-right: 1px;
    vertical-align: top;
}

.list .mark {
    padding: 0 1px;
}

.d-icon {
    width: 11px;
}

.d-doc {
    width: 45px;
}

.d-status {
    width: 57px;
}

.d-sum {
    width: 39px;
}

/* Status bar */

.statusbar {
    display: flex;
    align-items: flex-end;
    justify-content: flex-end;
    height: 18px;
}

.grip {
    width: 8px;
    height: 8px;
    background: repeating-linear-gradient(135deg, #e8e8e8 0 1px, #999 1px 2px);
    clip-path: polygon(100% 0, 100% 100%, 0 100%);
}
```
